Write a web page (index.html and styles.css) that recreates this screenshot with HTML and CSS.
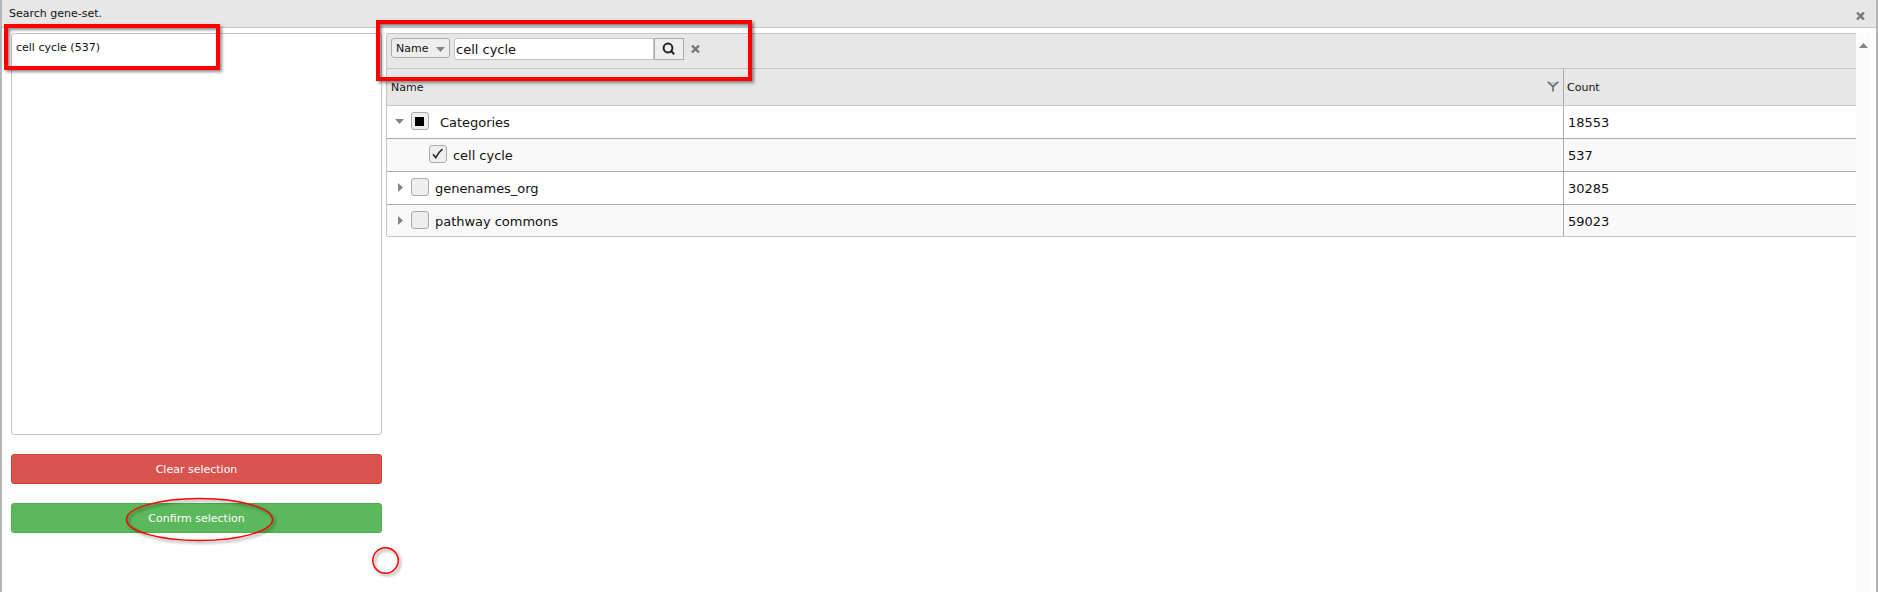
FILE: index.html
```html
<!DOCTYPE html>
<html lang="en">
<head>
<meta charset="utf-8">
<title>Search gene-set.</title>
<link rel="stylesheet" href="styles.css">
</head>
<body>
<div class="window">
  <header class="titlebar"><span>Search gene-set.</span>
    <svg class="close" width="9" height="8" viewBox="0 0 9 8"><path d="M1 .5L8 7.5M8 .5L1 7.5"/></svg>
  </header>
  <main class="content">
    <aside class="side">
      <div class="list"><span>cell cycle (537)</span></div>
      <button class="btn danger">Clear selection</button>
      <button class="btn success">Confirm selection</button>
    </aside>
    <section class="grid">
      <div class="toolbar">
        <div class="select"><span>Name</span><svg width="9" height="5" viewBox="0 0 9 5"><path d="M0 0H9L4.5 5Z"/></svg></div>
        <div class="field">cell cycle</div>
        <div class="search"><svg width="14" height="14" viewBox="0 0 14 14"><circle cx="6" cy="6" r="4.4"/><path d="M8.8 8.8L12.2 12.2"/></svg></div>
        <svg class="clear" width="9" height="8" viewBox="0 0 9 8"><path d="M1 .5L8 7.5M8 .5L1 7.5"/></svg>
      </div>
      <div class="row head">
        <div class="name"><span>Name</span><svg class="filter" width="12" height="11" viewBox="0 0 12 11"><path class="funnel" d="M1.500 1H10.500L6 5.500Z"/><path d="M.7 .7L6 5.700L11.300 .7M6 5.500V10.500"/></svg></div>
        <div class="count">Count</div>
      </div>
      <div class="row">
        <div class="name"><svg class="arrow" width="9" height="9" viewBox="0 0 9 9"><path d="M0 2H9L4.5 7Z"/></svg><i class="check"><b></b></i><span class="label wide">Categories</span></div>
        <div class="count">18553</div>
      </div>
      <div class="row alt">
        <div class="name child"><i class="check"><svg width="12" height="12" viewBox="0 0 12 12"><path class="tick" d="M1 6.200L3.700 9.700C5.500 6 7.500 3.500 10.500 1.200"/></svg></i><span class="label">cell cycle</span></div>
        <div class="count">537</div>
      </div>
      <div class="row">
        <div class="name"><svg class="arrow" width="9" height="9" viewBox="0 0 9 9"><path d="M3 0V9L8 4.500Z"/></svg><i class="check"></i><span class="label">genenames_org</span></div>
        <div class="count">30285</div>
      </div>
      <div class="row alt last">
        <div class="name"><svg class="arrow" width="9" height="9" viewBox="0 0 9 9"><path d="M3 0V9L8 4.500Z"/></svg><i class="check"></i><span class="label">pathway commons</span></div>
        <div class="count">59023</div>
      </div>
    </section>
    <div class="scroll"><svg width="9" height="5" viewBox="0 0 9 5"><path d="M4.500 0L9 5H0Z"/></svg></div>
  </main>
</div>
<div class="mark mark-list"></div>
<div class="mark mark-search"></div>
<svg class="ring ring-confirm" width="148" height="43" viewBox="0 0 148 43"><ellipse cx="73.500" cy="21.500" rx="73" ry="21"/></svg>
<svg class="ring ring-dot" width="27" height="27" viewBox="0 0 27 27"><circle cx="13.500" cy="13.500" r="12.700"/></svg>
</body>
</html>
```

FILE: styles.css
```css
* { box-sizing: border-box; }
body { margin: 0; width: 1878px; height: 592px; overflow: hidden; font: 11px/16px Verdana, "DejaVu Sans", sans-serif; color: #111; }
.window { height: 592px; border-left: 2px solid #b4b4b4; border-right: 2px solid #b4b4b4; background: #fff; }
.titlebar { height: 28px; background: #e7e7e7; border-bottom: 1px solid #c5c5c5; display: flex; justify-content: space-between; padding: 6px 11px 0 7px; }
.close, .clear { fill: none; stroke: #777; stroke-width: 2.4; }
.close { margin-top: 6px; }
.content { display: flex; height: 564px; padding: 5px 5px 0 9px; }
.side { width: 371px; margin-right: 4px; display: flex; flex-direction: column; }
.list { height: 402px; border: 1px solid #c5c5c5; border-radius: 3px; padding: 6px 4px; margin-bottom: 19px; }
.btn { height: 30px; border: 1px solid #d43f3a; border-radius: 3px; margin-bottom: 19px; padding: 2px 0 0; color: #fff; font: inherit; }
.danger { background: #d9534f; }
.success { background: #5cb85c; border-color: #4cae4c; }
.grid { width: 1470px; height: 204px; border: 1px solid #c5c5c5; border-right: 0; border-radius: 3px 0 0 3px; overflow: hidden; }
.toolbar { height: 35px; background: #e7e7e7; border-bottom: 1px solid #c5c5c5; display: flex; padding: 4px 0 0 4px; }
.select { width: 59px; height: 20px; border: 1px solid #aaa; border-radius: 3px; background: #eee; display: flex; align-items: center; justify-content: space-between; padding: 2px 4px 0; margin-right: 4px; }
.select svg, .arrow, .scroll svg { fill: #858585; }
.field { width: 200px; height: 22px; border: 1px solid #c5c5c5; border-radius: 3px 0 0 3px; background: #fff; font-size: 13px; line-height: 21px; padding-left: 1px; }
.search { width: 30px; height: 22px; border: 1px solid #aaa; background: #eee; display: flex; align-items: center; justify-content: center; }
.search svg { fill: none; stroke: #222; stroke-width: 2; }
.clear { margin: 7px 0 0 7px; }
.row { height: 33px; display: flex; border-bottom: 1px solid #aaa; font-size: 13px; }
.alt { background: #f9f9f9; }
.last { height: 32px; border-bottom: 0; }
.head { height: 37px; background: #e7e7e7; border-color: #c5c5c5; font-size: 11px; }
.name { width: 1177px; border-right: 1px solid #aaa; display: flex; padding-left: 8px; }
.count { padding: 9px 0 0 4px; }
.head .name { justify-content: space-between; padding: 11px 4px 0 4px; }
.head .count { padding: 11px 0 0 3px; }
.filter { margin-top: 1px; fill: none; stroke: #59636b; stroke-width: 1.500; }
.funnel { fill: #c3cbd2; stroke: none; }
.arrow { margin: 11px 7px 0 0; }
.check { width: 18px; height: 18px; margin-top: 6px; border: 1px solid #aaa; border-radius: 3px; background: #eee; display: flex; align-items: center; justify-content: center; }
.check b { width: 9px; height: 9px; margin-right: 1px; background: #000; }
.tick { fill: none; stroke: #222; stroke-width: 1.5; }
.child { padding-left: 42px; }
.label { padding: 9px 0 0 6px; letter-spacing: -.03px; }
.wide { padding-left: 11px; }
.scroll { width: 15px; background: #fbfbfb; padding: 10px 3px; line-height: 0; }
.mark { position: absolute; border: 4px solid #f00; box-shadow: 2px 2px 3px rgba(0,0,0,.45), inset 2px 2px 3px rgba(0,0,0,.45); }
.mark-list { left: 4px; top: 24px; width: 216px; height: 46px; }
.mark-search { left: 376px; top: 20px; width: 376px; height: 61px; }
.ring { position: absolute; overflow: visible; fill: none; stroke: #f00; stroke-width: 1.500; filter: drop-shadow(2px 2px 1.500px rgba(0,0,0,.45)); }
.ring-confirm { left: 126px; top: 498px; }
.ring-dot { left: 371.500px; top: 546.500px; }
```
